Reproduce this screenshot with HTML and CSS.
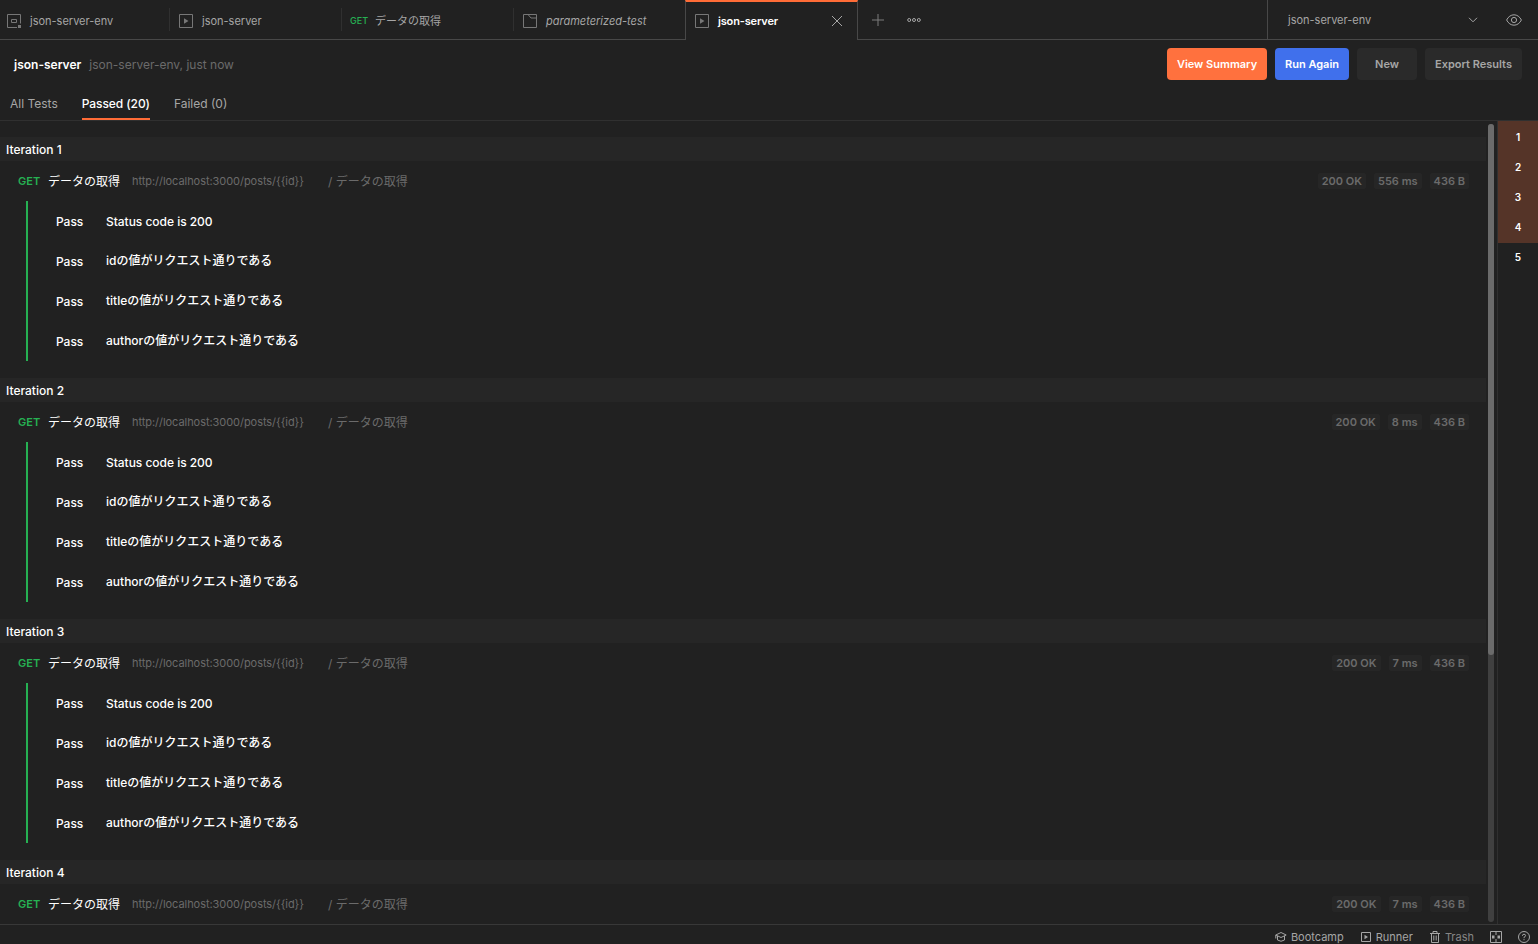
FILE: index.html
```
<!DOCTYPE html>
<html lang="ja">

<head>
    <meta charset="UTF-8">
    <meta name="viewport" content="width=device-width, initial-scale=1.0">
    <link rel="stylesheet" href="styles.css">
    <title>json-server</title>
</head>

<body>

    <div class="topo">
        <div class="tab">
            <svg class="icon" width="14" height="14" viewBox="0 0 14 14"><path d="M13.5 9.500V.5H.5v13H10"/><path d="M4.500 5.500h5v3h-5z"/><path class="fill" d="M11 11h3v3h-3z"/></svg>
            <span>json-server-env</span>
        </div>
        <div class="tab">
            <svg class="icon" width="14" height="14" viewBox="0 0 14 14"><path d="M.5.5h13v13H.5z"/><path class="fill" d="M5 4.300v5.400L9.500 7z"/></svg>
            <span>json-server</span>
        </div>
        <div class="tab tab-get">
            <b class="method">GET</b>
            <span class="jp">データの取得</span>
        </div>
        <div class="tab">
            <svg class="icon" width="14" height="14" viewBox="0 0 14 14"><path d="M.5.5h13v13H.5z"/><path d="M5 .5l3 3.500h5.500"/></svg>
            <span class="italic">parameterized-test</span>
        </div>
        <div class="tab active">
            <svg class="icon" width="14" height="14" viewBox="0 0 14 14"><path d="M.5.5h13v13H.5z"/><path class="fill" d="M5 4.300v5.400L9.500 7z"/></svg>
            <span>json-server</span>
            <svg class="close" width="12" height="12" viewBox="0 0 12 12"><path d="M1 1l10 10M11 1L1 11"/></svg>
        </div>
        <div class="tab-actions">
            <svg width="12" height="12" viewBox="0 0 12 12"><path d="M6 0v12M0 6h12"/></svg>
            <svg class="more" width="14" height="6" viewBox="0 0 14 6"><circle cx="2.200" cy="3" r="1.500"/><circle cx="7" cy="3" r="1.500"/><circle cx="11.800" cy="3" r="1.500"/></svg>
        </div>
        <div class="env">
            <span>json-server-env</span>
            <svg width="10" height="6" viewBox="0 0 10 6"><path d="M1 .8l4 4 4-4"/></svg>
            <svg class="eye" width="16" height="12" viewBox="0 0 16 12"><path d="M.6 6C2.300 2.600 5 .8 8 .8S13.700 2.600 15.400 6C13.700 9.400 11 11.200 8 11.200S2.300 9.400.6 6z"/><circle cx="8" cy="6" r="2.600"/></svg>
        </div>
    </div>

    <div class="header">
        <span class="run-name">json-server</span>
        <span class="run-info">json-server-env, just now</span>
        <div class="buttons">
            <button class="orange">View Summary</button>
            <button class="blue">Run Again</button>
            <button class="new">New</button>
            <button class="export">Export Results</button>
        </div>
    </div>

    <div class="filters">
        <span>All Tests</span>
        <span class="selected">Passed (20)</span>
        <span>Failed (0)</span>
    </div>

    <div class="main">
        <div class="results">
            <div class="iteration">
                <h3>Iteration 1</h3>
                <div class="request">
                    <b class="method">GET</b><span class="name jp">データの取得</span><span class="url">http://localhost:3000/posts/{{id}}</span><span class="path jp">/ データの取得</span>
                    <div class="stats"><span>200 OK</span><span>556 ms</span><span>436 B</span></div>
                </div>
                <ul class="tests">
                    <li><span>Pass</span><span>Status code is 200</span></li>
                    <li><span>Pass</span><span class="jp">idの値がリクエスト通りである</span></li>
                    <li><span>Pass</span><span class="jp">titleの値がリクエスト通りである</span></li>
                    <li><span>Pass</span><span class="jp">authorの値がリクエスト通りである</span></li>
                </ul>
            </div>
            <div class="iteration">
                <h3>Iteration 2</h3>
                <div class="request">
                    <b class="method">GET</b><span class="name jp">データの取得</span><span class="url">http://localhost:3000/posts/{{id}}</span><span class="path jp">/ データの取得</span>
                    <div class="stats"><span>200 OK</span><span>8 ms</span><span>436 B</span></div>
                </div>
                <ul class="tests">
                    <li><span>Pass</span><span>Status code is 200</span></li>
                    <li><span>Pass</span><span class="jp">idの値がリクエスト通りである</span></li>
                    <li><span>Pass</span><span class="jp">titleの値がリクエスト通りである</span></li>
                    <li><span>Pass</span><span class="jp">authorの値がリクエスト通りである</span></li>
                </ul>
            </div>
            <div class="iteration">
                <h3>Iteration 3</h3>
                <div class="request">
                    <b class="method">GET</b><span class="name jp">データの取得</span><span class="url">http://localhost:3000/posts/{{id}}</span><span class="path jp">/ データの取得</span>
                    <div class="stats"><span>200 OK</span><span>7 ms</span><span>436 B</span></div>
                </div>
                <ul class="tests">
                    <li><span>Pass</span><span>Status code is 200</span></li>
                    <li><span>Pass</span><span class="jp">idの値がリクエスト通りである</span></li>
                    <li><span>Pass</span><span class="jp">titleの値がリクエスト通りである</span></li>
                    <li><span>Pass</span><span class="jp">authorの値がリクエスト通りである</span></li>
                </ul>
            </div>
            <div class="iteration">
                <h3>Iteration 4</h3>
                <div class="request">
                    <b class="method">GET</b><span class="name jp">データの取得</span><span class="url">http://localhost:3000/posts/{{id}}</span><span class="path jp">/ データの取得</span>
                    <div class="stats"><span>200 OK</span><span>7 ms</span><span>436 B</span></div>
                </div>
            </div>
        </div>
        <div class="scrollbar"><div class="thumb"></div></div>
        <div class="pages">
            <span class="seen">1</span>
            <span class="seen">2</span>
            <span class="seen">3</span>
            <span class="seen last">4</span>
            <span>5</span>
        </div>
    </div>

    <div class="footer">
        <div class="item">
            <svg width="12" height="12" viewBox="0 0 12 12"><path d="M.8 4L6 1.500 11.200 4 6 6.500z"/><path d="M2.500 5v4Q6 11.500 9.500 9V5M.8 4v3.500"/></svg>
            <span>Bootcamp</span>
        </div>
        <div class="item">
            <svg width="12" height="12" viewBox="0 0 12 12"><path d="M1.500 1.500h9v9h-9z"/><path class="fill" d="M4.500 3.800v4.400L8 6z"/></svg>
            <span>Runner</span>
        </div>
        <div class="item trash">
            <svg width="12" height="12" viewBox="0 0 12 12"><path d="M1 2.500h10M4 2.500v-2h4v2M2.500 2.500v9h7v-9M4.800 4.500v5M7.200 4.500v5"/></svg>
            <span>Trash</span>
        </div>
        <svg class="panes" width="12" height="12" viewBox="0 0 12 12"><path d="M.5.5h11v11H.5zM6 .5V4M6 8v3.500"/><path class="fill" d="M2 4.500h2.500v3H2zM7.500 4.500H10v3H7.500z"/></svg>
        <svg class="help" width="12" height="12" viewBox="0 0 12 12"><circle cx="6" cy="6" r="5.500"/><path d="M4.400 4.800Q4.500 3.200 6 3.200T7.600 4.700Q7.600 5.500 6 6.300V7.200M6 8.200v1"/></svg>
    </div>

</body>

</html>
```
FILE: styles.css
```
* {
    box-sizing: border-box;
}

body {
    margin: 0;
    width: 1538px;
    height: 944px;
    overflow: hidden;
    display: flex;
    flex-direction: column;
    background: #212121;
    color: #a6a6a6;
    font-family: Inter, "Noto Sans CJK JP", sans-serif;
    font-size: 12px;
    line-height: 16px;
    white-space: nowrap;
}

svg {
    flex: none;
    fill: none;
    stroke: #a6a6a6;
}

svg .fill {
    fill: #a6a6a6;
    stroke: none;
}

.method {
    color: #26b153;
    font-weight: 600;
}

/* abas */
.topo {
    display: flex;
    flex: none;
    height: 40px;
    box-shadow: inset 0 -1px #484848;
}

.tab {
    display: flex;
    align-items: center;
    position: relative;
    width: 172px;
    height: 40px;
    padding: 2px 14px 0 9px;
    font-size: 11px;
}

.tab:first-child {
    width: 170px;
    padding-left: 7px;
}

.tab:not(.active)::after {
    content: "";
    position: absolute;
    right: 0;
    top: 8px;
    width: 1px;
    height: 23px;
    background: #303030;
}

.tab .icon {
    margin-right: 9px;
    opacity: 0.65;
}

.tab-get {
    padding-left: 8px;
}

.tab .method {
    margin-right: 7px;
    font-size: 9px;
    font-weight: 500;
}

.tab .italic {
    font-style: italic;
}

.tab.active {
    border: solid #484848;
    border-width: 0 1px;
    border-top: 2px solid #ff6c37;
    padding-top: 0;
    width: 173px;
    margin-left: -1px;
    background: #212121;
    color: #fff;
    font-weight: 600;
    letter-spacing: -0.15px;
}

.tab .close {
    margin-left: auto;
}

.tab-actions {
    display: flex;
    align-items: center;
    gap: 23px;
    margin-left: 14px;
    padding-bottom: 1px;
}

.tab-actions svg:first-child {
    stroke: #7d7d7d;
}

.env {
    display: flex;
    align-items: center;
    width: 271px;
    margin-left: auto;
    padding: 0 16px 1px 20px;
    border-left: 1px solid #484848;
    font-size: 11px;
}

.env span {
    flex: 1;
    padding-top: 1px;
}

.env .eye {
    margin-left: 28px;
}

/* cabecalho */
.header {
    display: flex;
    align-items: center;
    flex: none;
    height: 48px;
    padding: 2px 16px 0 14px;
}

.run-name {
    color: #fff;
    font-weight: 600;
}

.run-info {
    margin-left: 8px;
    color: #6b6b6b;
}

.buttons {
    display: flex;
    gap: 8px;
    margin-left: auto;
    margin-top: -2px;
}

.buttons button {
    height: 32px;
    padding: 0;
    border: none;
    border-radius: 4px;
    background: #2a2a2a;
    color: #a6a6a6;
    font-family: inherit;
    font-size: 11px;
    font-weight: 600;
}

.buttons .orange {
    width: 100px;
    background: #ff713e;
    color: #fff;
}

.buttons .blue {
    width: 74px;
    background: #4070ec;
    color: #fff;
}

.buttons .new {
    width: 60px;
}

.buttons .export {
    width: 97px;
}

.filters {
    display: flex;
    flex: none;
    gap: 24px;
    height: 33px;
    padding-left: 10px;
    border-bottom: 1px solid #303030;
}

.filters span {
    padding-top: 8px;
}

.filters .selected {
    border-bottom: 2px solid #ff6c37;
    color: #fff;
    font-weight: 500;
    letter-spacing: -0.08px;
}

/* resultados */
.main {
    display: flex;
    flex: none;
    height: 803px;
}

.results {
    width: 1486px;
    padding-top: 16px;
    overflow: hidden;
}

.iteration {
    height: 241px;
    color: #fff;
}

.iteration h3 {
    height: 24px;
    margin: 0;
    padding: 1px 0 0 6px;
    background: #262626;
    font-size: 12px;
    font-weight: 500;
    line-height: 24px;
}

.request {
    display: flex;
    align-items: center;
    height: 40px;
    padding: 0 17px 0 18px;
}

.request .jp {
    padding-top: 1px;
}

.request .method {
    width: 30px;
    font-size: 11px;
}

.request .name {
    width: 84px;
}

.request .url {
    width: 196px;
    color: #6b6b6b;
    font-size: 11px;
    letter-spacing: -0.05px;
}

.request .path {
    color: #6b6b6b;
}

.stats {
    display: flex;
    gap: 8px;
    margin-left: auto;
}

.stats span {
    padding: 0 4px;
    border-radius: 2px;
    background: #262626;
    color: #6b6b6b;
    font-size: 11px;
    font-weight: 600;
}

.tests {
    margin: 0 0 0 26px;
    padding: 0;
    border-left: 2px solid #26b153;
    list-style: none;
    font-weight: 500;
}

.tests li {
    display: flex;
    align-items: center;
    height: 40px;
    padding: 1px 0 0 28px;
    letter-spacing: -0.03px;
}

.tests li span:first-child {
    width: 50px;
}

.tests .jp {
    margin-top: -1px;
    letter-spacing: 0;
}

.scrollbar {
    width: 6px;
    height: 798px;
    margin: 3px 3px 0 2px;
    border-radius: 3px;
    background: #404040;
}

.thumb {
    height: 531px;
    border-radius: 3px;
    background: #6b6b6b;
}

.pages {
    display: flex;
    flex-direction: column;
    width: 41px;
    border-left: 1px solid #303030;
    color: #fff;
    font-size: 10px;
    font-weight: 600;
    text-align: center;
}

.pages span {
    height: 30px;
    line-height: 32px;
}

.pages .seen {
    background: #553428;
}

.pages .last {
    height: 32px;
    margin-bottom: -2px;
}

/* rodape */
.footer {
    display: flex;
    align-items: center;
    justify-content: flex-end;
    flex: none;
    height: 25px;
    padding: 0 8px 0 0;
    border-top: 1px solid #383838;
    font-size: 11px;
}

.footer .item {
    display: flex;
    align-items: center;
    margin-right: 16px;
}

.footer .item svg {
    margin-right: 4px;
}

.footer .trash span {
    color: #858585;
}

.footer .panes {
    margin-right: 16px;
}
```
